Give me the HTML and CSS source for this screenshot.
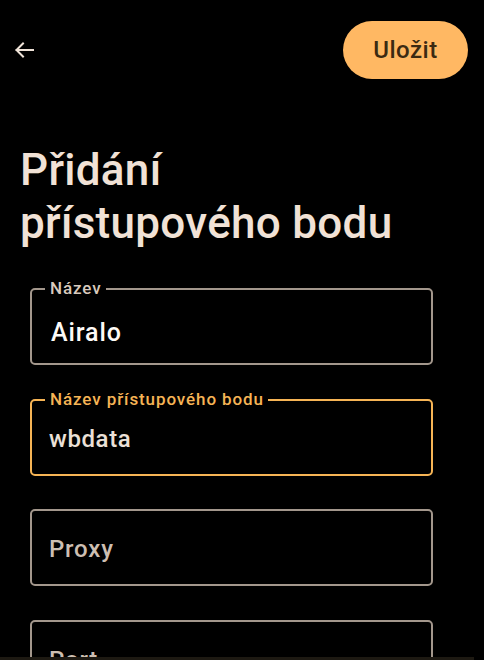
FILE: index.html
```html
<!DOCTYPE html>
<html lang="cs">
<head>
<meta charset="utf-8">
<title>Přidání přístupového bodu</title>
<link rel="stylesheet" href="styles.css">
</head>
<body>
<div class="screen">
  <header class="topbar">
    <button class="back" aria-label="Zpět">
      <svg width="24" height="24" viewBox="0 0 24 24"><path d="M21 12H4.5M11 5.5L4.5 12l6.5 6.5" fill="none" stroke="#efe3d8" stroke-width="2" stroke-linecap="square"/></svg>
    </button>
    <button class="save">Uložit</button>
  </header>
  <h1 class="title">Přidání<br>přístupového bodu</h1>
  <div class="form">
    <div class="field">
      <span class="label">Název</span>
      <span class="value value-name">Airalo</span>
    </div>
    <div class="field field-focus">
      <span class="label">Název přístupového bodu</span>
      <span class="value">wbdata</span>
    </div>
    <div class="field">
      <span class="value placeholder">Proxy</span>
    </div>
    <div class="field">
      <span class="value placeholder">Port</span>
    </div>
  </div>
  <div class="navstrip"></div>
</div>
</body>
</html>
```
FILE: styles.css
```css
* { box-sizing: border-box; }
html, body { margin: 0; padding: 0; background: #000; }
body {
  font-family: Roboto, "Noto Sans", "Liberation Sans", sans-serif;
  color: #efe3d8;
  width: 484px;
  height: 660px;
  overflow: hidden;
}
.screen { display: flex; flex-direction: column; }
.topbar {
  display: flex;
  justify-content: space-between;
  align-items: center;
  padding: 21px 16px 0 12px;
  height: 79px;
}
.back {
  background: none; border: 0; padding: 0;
  width: 24px; height: 24px;
  display: flex; align-items: center; justify-content: center;
}
.save {
  width: 125px; height: 58px;
  border: 0; border-radius: 29px;
  background: #ffb863;
  color: #3b2a12;
  font-family: Roboto, "Noto Sans", sans-serif;
  font-size: 24px;
  font-weight: 500;
  letter-spacing: 0.5px;
  padding: 0;
}
.title {
  margin: 64.5px 0 0 20px;
  font-size: 44px;
  line-height: 53px;
  font-weight: 500;
  letter-spacing: 0.3px;
  color: #f1e2d6;
}
.form {
  display: flex;
  flex-direction: column;
  gap: 33.5px;
  margin: 38.5px 0 0 30px;
  width: 403px;
}
.field {
  position: relative;
  height: 77px;
  border: 2px solid #a3978c;
  border-radius: 5px;
  display: flex;
  align-items: flex-start;
  padding: 24px 0 0 17px;
}
.field-focus { border-color: #f6b455; }
.label {
  position: absolute;
  top: -13px;
  left: 13px;
  padding: 0 4px 0 5px;
  background: #000;
  font-size: 17px;
  line-height: 22px;
  font-weight: 500;
  letter-spacing: 0.9px;
  color: #d9cabd;
}
.field-focus .label { color: #f6b455; }
.value {
  font-size: 24px;
  line-height: 28px;
  font-weight: 500;
  letter-spacing: 0.6px;
  color: #ebe0d7;
}
.value-name {
  color: #fdfaf6;
  font-size: 25px;
  letter-spacing: 0.9px;
  margin: 5px 0 0 2px;
}
.placeholder { color: #cdbfb2; letter-spacing: 0.8px; }
.navstrip {
  position: fixed;
  left: 0; bottom: 0;
  width: 474px; height: 3px;
  background: #1d1912;
}
```
